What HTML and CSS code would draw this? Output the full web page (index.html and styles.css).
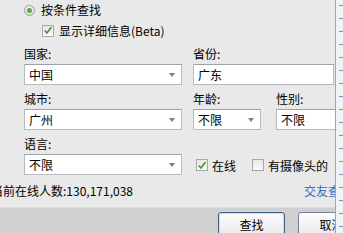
FILE: index.html
```html
<!DOCTYPE html>
<html lang="zh">
<head>
<meta charset="utf-8">
<link rel="stylesheet" href="styles.css">
</head>
<body>
<div class="window">
  <div class="main">
    <div class="content">
      <div class="opt-row radio-row"><span class="radio"><span class="dot"></span></span><span>按条件查找</span></div>
      <div class="opt-row check-row"><span class="check on"><svg viewBox="0 0 11 11" width="11" height="11"><path d="M2 5.5 L4.3 8.3 L9.2 1.8" fill="none" stroke="#3c9a1e" stroke-width="1.8"/></svg></span><span>显示详细信息(Beta)</span></div>
      <div class="form">
        <div class="label c1">国家:</div>
        <div class="label c23">省份:</div>
        <div class="select c1"><span>中国</span><span class="arrow"></span></div>
        <div class="input c23">广东</div>
        <div class="label c1">城市:</div>
        <div class="label c2">年龄:</div>
        <div class="label c3">性别:</div>
        <div class="select c1"><span>广州</span><span class="arrow"></span></div>
        <div class="select c2 small"><span>不限</span><span class="arrow"></span></div>
        <div class="input c3">不限</div>
        <div class="label c1">语言:</div>
        <div class="label c23"></div>
        <div class="select c1"><span>不限</span><span class="arrow"></span></div>
        <div class="checks c23">
          <span class="cb"><span class="check on"><svg viewBox="0 0 11 11" width="11" height="11"><path d="M2 5.5 L4.3 8.3 L9.2 1.8" fill="none" stroke="#3c9a1e" stroke-width="1.8"/></svg></span>在线</span>
          <span class="cb"><span class="check"></span>有摄像头的</span>
        </div>
      </div>
      <div class="count-row"><span class="count">当前在线人数:130,171,038</span><span class="link">交友查找</span></div>
    </div>
    <div class="buttons">
      <div class="btn primary">查找</div>
      <div class="btn">取消</div>
    </div>
  </div>
  <div class="sep"></div>
  <div class="strip"></div>
</div>
</body>
</html>
```
FILE: styles.css
```css
* { box-sizing: border-box; }
html, body { margin: 0; padding: 0; }
body {
  width: 343px;
  height: 233px;
  overflow: hidden;
  font-family: "Noto Sans CJK SC", "Liberation Sans", sans-serif;
  font-size: 12px;
  color: #000;
  background: #e8e8e8;
}
.window { display: flex; height: 233px; }
.main {
  width: 335px;
  display: flex;
  flex-direction: column;
  overflow: hidden;
}
.content {
  flex: 0 0 207px;
  background: #e9e9e9;
}
.opt-row {
  display: flex;
  align-items: center;
  gap: 6px;
  line-height: 14px;
}
.radio-row { height: 20px; padding-left: 24px; }
.check-row { height: 21px; padding-left: 42px; gap: 5px; }
.radio {
  width: 11px; height: 11px;
  border-radius: 50%;
  border: 1px solid #9a9a9a;
  background: linear-gradient(#f4f4f4, #dcdcdc);
  display: flex; align-items: center; justify-content: center;
}
.dot {
  width: 5px; height: 5px; border-radius: 50%;
  background: #5aa83a;
}
.check {
  width: 12px; height: 12px;
  border: 1px solid #a8a8a8;
  background: linear-gradient(#e6e6e6, #fbfbfb);
  display: inline-flex; align-items: center; justify-content: center;
  flex: none;
}
.check svg { display: block; }
.form {
  display: grid;
  padding-left: 24px;
  padding-right: 1px;
  grid-template-columns: 158px 83px 1fr;
  grid-template-rows: 23px 22px 23px 22px 23px 22px;
  column-gap: 11px;
}
.c1 { grid-column: 1; }
.c2 { grid-column: 2; }
.c3 { grid-column: 3; margin-left: -11px; }
.c23 { grid-column: 2 / 4; }
.label {
  display: flex; align-items: center;
  padding-top: 1px;
}
.select, .input {
  background: #fff;
  border: 1px solid #b7babf;
  border-top-color: #9fa3a8;
  display: flex; align-items: center;
  padding-left: 4px;
  height: 21px;
}
.select { justify-content: space-between; padding-right: 6px; }
.small { width: 68px; }
.c3.input { margin-right: -12px; }
.arrow {
  width: 0; height: 0;
  border-left: 3.5px solid transparent;
  border-right: 3.5px solid transparent;
  border-top: 4px solid #7e7e7e;
}
.checks {
  display: flex; align-items: center; gap: 16px;
  padding-left: 3px;
}
.cb { display: flex; align-items: center; gap: 4px; }
.count-row {
  display: flex; align-items: center;
  height: 31px;
  padding-bottom: 2px;
}
.count { margin-left: -9px; white-space: nowrap; }
.link {
  margin-left: auto; margin-right: -17px;
  color: #3a6cc2; white-space: nowrap;
}
.buttons {
  flex: 1;
  background: #d0d0d0;
  border-top: 1px solid #dadada;
  display: flex;
  gap: 13px;
  padding: 4px 0 0 218px;
}
.btn {
  flex: none;
  width: 67px; height: 24px;
  border: 1px solid #707e96;
  border-radius: 3px;
  background: linear-gradient(#fdfdfd, #eaeaea);
  display: flex; align-items: center; justify-content: center;
}
.btn.primary { border-color: #3f5f86; box-shadow: inset 0 0 0 1px #c9def2; }
.sep { width: 1px; background: #98a6bd; flex: none; }
.strip {
  width: 7px; flex: none;
  background:
    repeating-linear-gradient(to bottom, transparent 0, transparent 5px, #6f8fc6 5px, #6f8fc6 6px, transparent 6px, transparent 13px) 3px 0 / 4px 100% no-repeat,
    #f2f3f5;
}
```
